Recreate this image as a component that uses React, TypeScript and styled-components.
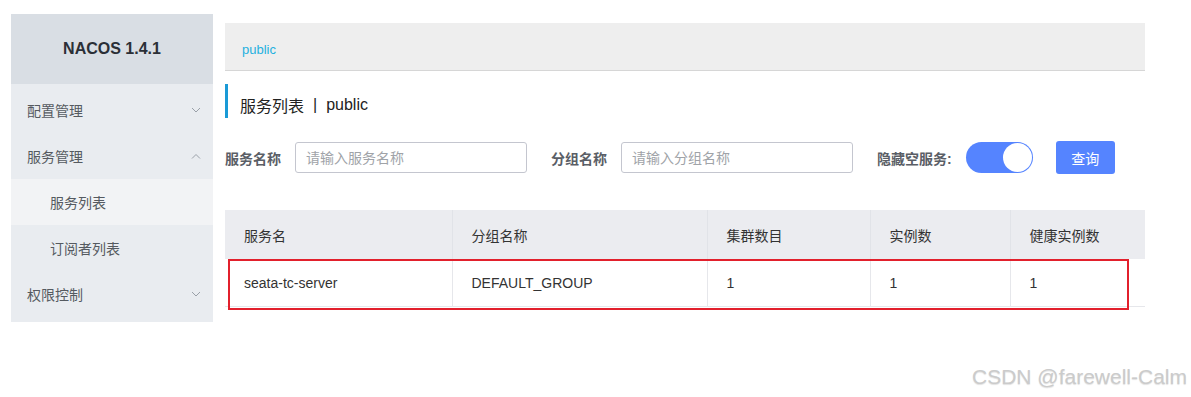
import styled, { createGlobalStyle } from "styled-components";

const GlobalStyle = createGlobalStyle`
    body {
        margin: 0;
        background: #ffffff;
        font-family: "Liberation Sans", "Noto Sans CJK SC", sans-serif;
        color: #333333;
    }
`;

const Page = styled.div`
    position: relative;
    width: 1191px;
    height: 397px;
    display: flex;
    align-items: flex-start;
    padding: 14px 0 0 11px;
    box-sizing: border-box;
    overflow: hidden;
`;

const Sidebar = styled.aside`
    width: 202px;
    height: 308px;
    background: #e9ecf0;
    display: flex;
    flex-direction: column;
`;

const Brand = styled.div`
    height: 70px;
    background: #d9dee4;
    display: flex;
    align-items: center;
    justify-content: center;
    font-size: 16px;
    font-weight: 700;
    color: #2b2f36;
`;

const Menu = styled.ul`
    list-style: none;
    margin: 0;
    padding: 3px 0 0;
`;

const MenuItem = styled.li<{ $sub?: boolean; $active?: boolean }>`
    height: 46px;
    display: flex;
    align-items: center;
    justify-content: space-between;
    padding: 0 12px 0 ${(p) => (p.$sub ? "39px" : "16px")};
    font-size: 14px;
    color: #555a60;
    background: ${(p) => (p.$active ? "#f2f3f5" : "transparent")};
`;

const Arrow = ({ up }: { up?: boolean }) => (
    <svg width="10" height="6" viewBox="0 0 10 6" fill="none">
        <path
            d={up ? "M1 5.5 L5 1.5 L9 5.5" : "M1 1 L5 5 L9 1"}
            stroke="#9aa0a8"
            strokeWidth="1"
        />
    </svg>
);

const Main = styled.main`
    width: 920px;
    margin: 9px 0 0 12px;
    display: flex;
    flex-direction: column;
`;

const TopBar = styled.div`
    background: #eeeeee;
    border-bottom: 1px solid #d6d6d6;
    display: flex;
    align-items: center;
    padding: 6px 0 0 17px;
    height: 41px;
    font-size: 13px;
    color: #1fb1df;
`;

const Title = styled.h2`
    margin: 13px 0 0;
    height: 34px;
    border-left: 3px solid #1a9ad6;
    padding: 7px 0 0 12px;
    display: flex;
    align-items: center;
    font-size: 16px;
    font-weight: 400;
    color: #222;
    box-sizing: border-box;
`;

const Divider = styled.span`
    margin: 0 9px;
`;

const FilterRow = styled.div`
    margin-top: 23px;
    height: 33px;
    display: flex;
    align-items: center;
`;

const Label = styled.label`
    font-size: 14px;
    font-weight: 700;
    color: #5a5e66;
    margin-right: 14px;
    white-space: nowrap;
`;

const Input = styled.input`
    width: 232px;
    height: 31px;
    box-sizing: border-box;
    border: 1px solid #c4c6cf;
    border-radius: 3px;
    padding: 0 10px;
    font-size: 14px;
    font-family: inherit;
    margin-right: 24px;
    outline: none;
    &::placeholder {
        color: #a0a3a8;
    }
`;

const Switch = styled.div<{ $on?: boolean }>`
    width: 67px;
    height: 31px;
    border-radius: 16px;
    background: ${(p) => (p.$on ? "#5584ff" : "#dcdfe6")};
    display: flex;
    align-items: center;
    justify-content: ${(p) => (p.$on ? "flex-end" : "flex-start")};
    padding: 1px;
    box-sizing: border-box;
    margin-right: 23px;
`;

const Knob = styled.div`
    width: 29px;
    height: 29px;
    border-radius: 50%;
    background: #ffffff;
`;

const Button = styled.button`
    width: 59px;
    height: 33px;
    border: none;
    border-radius: 3px;
    background: #5584ff;
    color: #ffffff;
    font-size: 14px;
    font-family: inherit;
`;

const TableWrap = styled.div`
    position: relative;
    margin-top: 36px;
`;

const Table = styled.table`
    width: 920px;
    border-collapse: collapse;
    table-layout: fixed;
    font-size: 14px;
`;

const Th = styled.th<{ $w: number }>`
    width: ${(p) => p.$w}px;
    box-sizing: border-box;
    height: 49px;
    background: #ebecf0;
    text-align: left;
    font-weight: 400;
    color: #333;
    padding: 0 0 0 19px;
    border-left: 1px solid #e1e3e8;
    &:first-child {
        border-left: none;
    }
`;

const Td = styled.td`
    height: 47px;
    padding: 0 0 0 19px;
    color: #333;
    border-left: 1px solid #e6e7eb;
    border-bottom: 1px solid #e6e7eb;
    &:first-child {
        border-left: none;
    }
`;

const Highlight = styled.div`
    position: absolute;
    left: 3px;
    top: 49px;
    width: 901px;
    height: 51px;
    border: 2px solid #e2202c;
    box-sizing: border-box;
    pointer-events: none;
`;

const Watermark = styled.div`
    position: absolute;
    right: 4px;
    top: 365px;
    font-size: 21px;
    color: #cbcbcb;
    text-shadow: 0 1px 1px rgba(0, 0, 0, 0.12);
`;

const columns = [
    { title: "服务名", width: 227 },
    { title: "分组名称", width: 255 },
    { title: "集群数目", width: 163 },
    { title: "实例数", width: 140 },
    { title: "健康实例数", width: 135 },
];

const rows = [["seata-tc-server", "DEFAULT_GROUP", "1", "1", "1"]];

export default function App() {
    return (
        <>
            <GlobalStyle />
            <Page>
                <Sidebar>
                    <Brand>NACOS 1.4.1</Brand>
                    <Menu>
                        <MenuItem>
                            配置管理
                            <Arrow />
                        </MenuItem>
                        <MenuItem>
                            服务管理
                            <Arrow up />
                        </MenuItem>
                        <MenuItem $sub $active>
                            服务列表
                        </MenuItem>
                        <MenuItem $sub>订阅者列表</MenuItem>
                        <MenuItem>
                            权限控制
                            <Arrow />
                        </MenuItem>
                    </Menu>
                </Sidebar>
                <Main>
                    <TopBar>public</TopBar>
                    <Title>
                        服务列表<Divider>|</Divider>public
                    </Title>
                    <FilterRow>
                        <Label>服务名称</Label>
                        <Input placeholder="请输入服务名称" />
                        <Label>分组名称</Label>
                        <Input placeholder="请输入分组名称" />
                        <Label>隐藏空服务:</Label>
                        <Switch $on>
                            <Knob />
                        </Switch>
                        <Button type="button">查询</Button>
                    </FilterRow>
                    <TableWrap>
                        <Table>
                            <thead>
                                <tr>
                                    {columns.map((c) => (
                                        <Th key={c.title} $w={c.width}>
                                            {c.title}
                                        </Th>
                                    ))}
                                </tr>
                            </thead>
                            <tbody>
                                {rows.map((r) => (
                                    <tr key={r[0]}>
                                        {r.map((v, i) => (
                                            <Td key={i}>{v}</Td>
                                        ))}
                                    </tr>
                                ))}
                            </tbody>
                        </Table>
                        <Highlight />
                    </TableWrap>
                </Main>
                <Watermark>CSDN @farewell-Calm</Watermark>
            </Page>
        </>
    );
}
